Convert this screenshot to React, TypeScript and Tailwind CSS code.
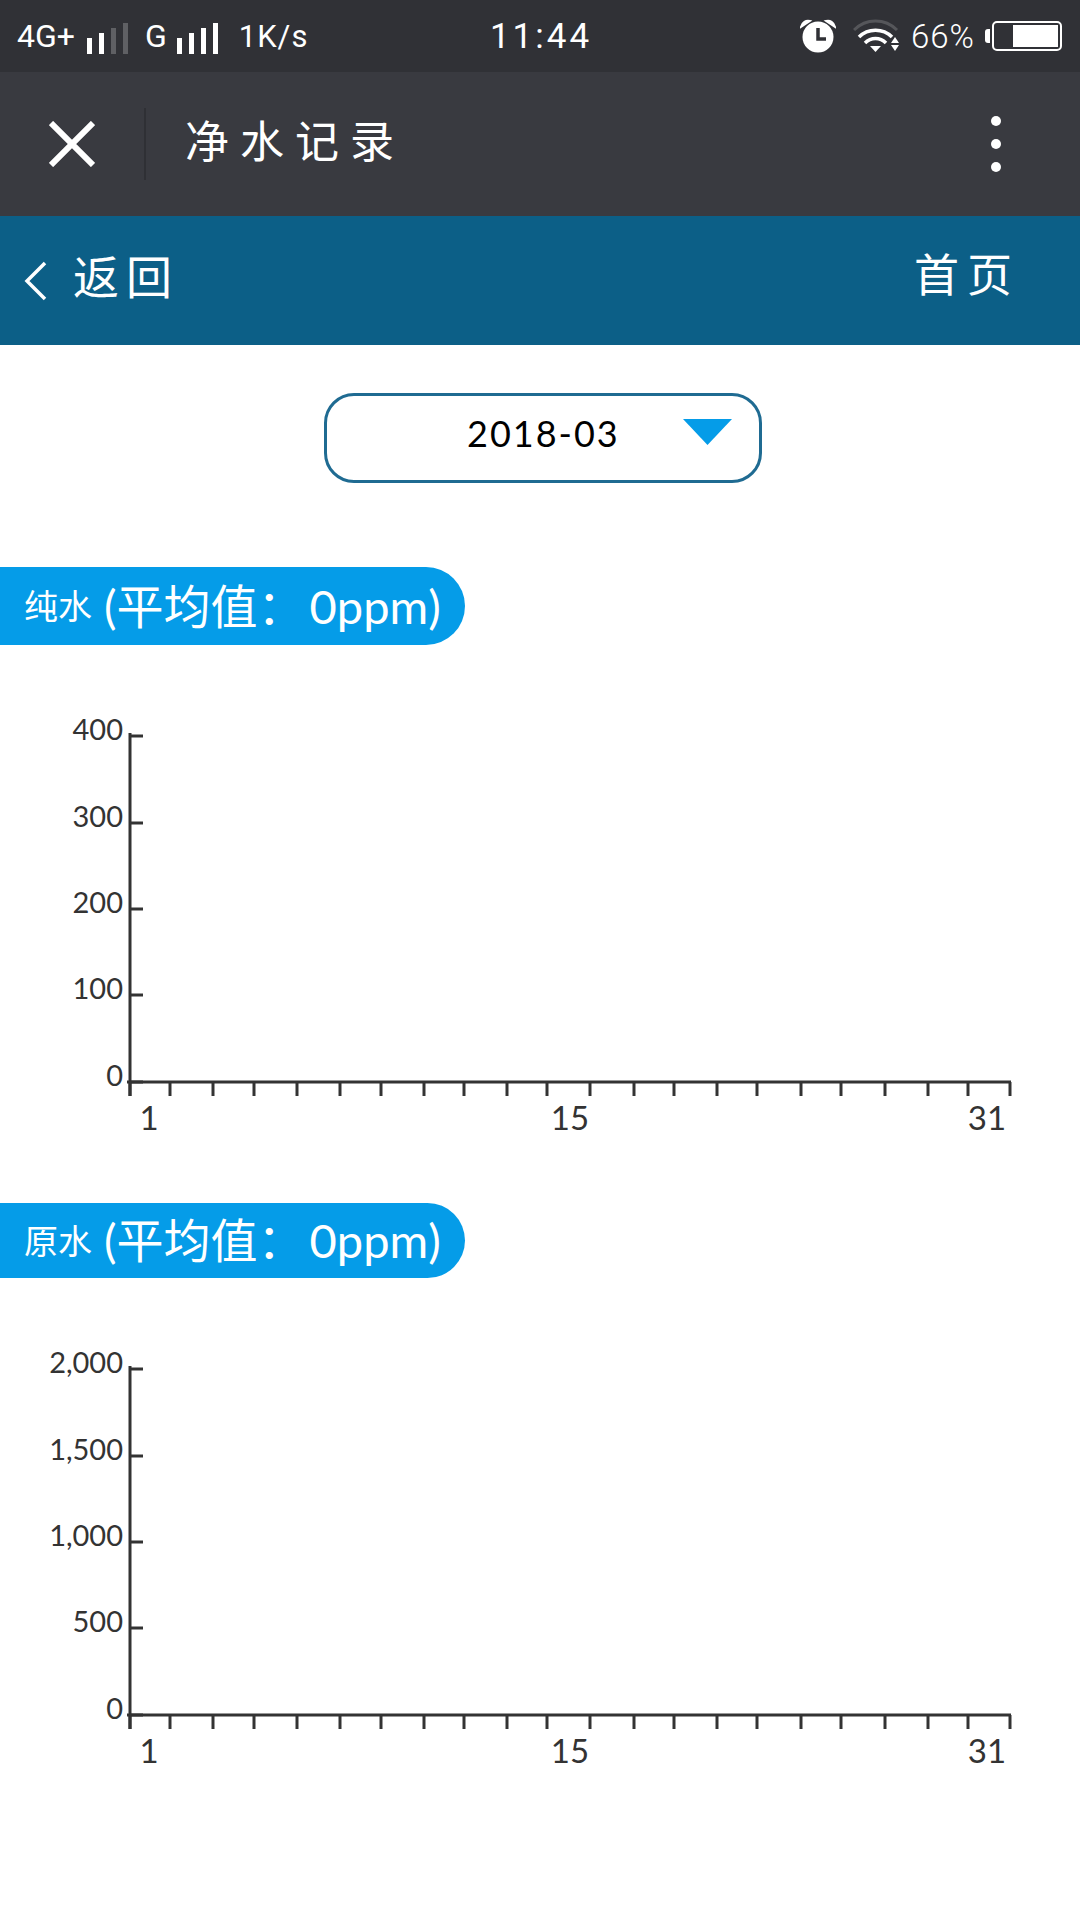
import React from 'react'

const FONT_CLASS = "font-['Lato','Noto_Sans_CJK_SC',sans-serif]"

function SignalBars({ dim = 0 }: { dim?: number }) {
    const heights = [16, 21, 26, 31]
    return (
        <div className="flex items-end gap-[7px] h-[31px]">
            {heights.map((h, i) => (
                <div
                    key={h}
                    className={i >= 4 - dim ? 'w-[5px] bg-[#5f6064]' : 'w-[5px] bg-white'}
                    style={{ height: h }}
                />
            ))}
        </div>
    )
}

function AlarmIcon() {
    return (
        <svg width="36" height="34" viewBox="0 0 36 34">
            <path d="M1 8 C2 3 6 1 10 2 Z" fill="#fff" stroke="#fff" strokeWidth="2" />
            <path d="M35 8 C34 3 30 1 26 2 Z" fill="#fff" stroke="#fff" strokeWidth="2" />
            <circle cx="18" cy="18" r="15.5" fill="#fff" />
            <path d="M18 9 V20 H26" fill="none" stroke="#303136" strokeWidth="3.5" />
        </svg>
    )
}

function WifiIcon() {
    return (
        <svg width="46" height="34" viewBox="0 0 46 34">
            <path d="M1 11 C13 -1 32 -1 44 11" fill="none" stroke="#55565a" strokeWidth="3" />
            <path d="M6 18 C15 9 30 9 39 18" fill="none" stroke="#fff" strokeWidth="3.5" />
            <path d="M12 24 C18 18 27 18 33 24" fill="none" stroke="#fff" strokeWidth="3.5" />
            <path d="M17 27 H28 L22.5 33 Z" fill="#fff" />
            <path d="M42 18 L46 24 H38 Z" fill="#fff" />
            <path d="M38 26 H46 L42 32 Z" fill="#fff" />
        </svg>
    )
}

function StatusBar() {
    return (
        <div className="grid grid-cols-[1fr_auto_1fr] items-center h-[72px] bg-[#303136] text-white font-['Roboto',sans-serif]">
            <div className="flex items-center pl-[17px]">
                <span className="text-[32px] leading-none">4G+</span>
                <div className="ml-[12px] mt-[4px]">
                    <SignalBars dim={2} />
                </div>
                <span className="ml-[17px] text-[32px] leading-none">G</span>
                <div className="ml-[10px] mt-[4px]">
                    <SignalBars />
                </div>
                <span className="ml-[21px] text-[31px] leading-none tracking-[1px]">1K/s</span>
            </div>
            <span className="ml-[2px] text-[35px] leading-none tracking-[3px]">11:44</span>
            <div className="flex items-center justify-end pr-[18px]">
                <AlarmIcon />
                <div className="ml-[17px]">
                    <WifiIcon />
                </div>
                <span className="ml-[12px] text-[33px] leading-none font-light tracking-[1px]">66%</span>
                <div className="ml-[10px] w-[5px] h-[14px] rounded-l-[3px] bg-white" />
                <div className="flex justify-end ml-[2px] w-[70px] h-[30px] border-2 border-white rounded-[5px] p-[2px]">
                    <div className="w-[45px] bg-white" />
                </div>
            </div>
        </div>
    )
}

function TitleBar() {
    return (
        <div className="flex items-center h-[144px] bg-[#393a40] text-white">
            <svg className="ml-[49px]" width="46" height="46" viewBox="0 0 46 46">
                <path d="M2 2 L44 44 M44 2 L2 44" stroke="#fff" strokeWidth="6" fill="none" />
            </svg>
            <div className="ml-[49px] w-[2px] h-[72px] bg-[#2f3035]" />
            <span className={`ml-[39px] mb-[7px] text-[44px] leading-none tracking-[11px] ${FONT_CLASS}`}>净水记录</span>
            <div className="ml-auto mr-[79px] flex flex-col gap-[13px]">
                <div className="w-[10px] h-[10px] rounded-full bg-white" />
                <div className="w-[10px] h-[10px] rounded-full bg-white" />
                <div className="w-[10px] h-[10px] rounded-full bg-white" />
            </div>
        </div>
    )
}

function NavBar() {
    return (
        <div className={`flex items-center h-[129px] bg-[#0c5f87] text-white ${FONT_CLASS}`}>
            <svg className="ml-[24px]" width="24" height="40" viewBox="0 0 24 40">
                <path d="M21 2 L3 20 L21 38" fill="none" stroke="#fff" strokeWidth="3.5" />
            </svg>
            <span className="ml-[25px] mb-[7px] text-[46px] leading-none tracking-[7px]">返回</span>
            <span className="ml-auto mr-[60px] mb-[11px] text-[45px] leading-none tracking-[8px]">首页</span>
        </div>
    )
}

function DateSelect() {
    return (
        <div className="flex items-center ml-[324px] mt-[48px] w-[438px] h-[90px] bg-white border-[3px] border-[#1f6b92] rounded-[30px]">
            <span className={`ml-[140px] mb-[11px] text-[36px] leading-none tracking-[2px] text-black ${FONT_CLASS}`}>2018-03</span>
            <svg className="ml-[63px] mb-[12px]" width="49" height="26" viewBox="0 0 49 26">
                <path d="M0 0 H49 L24.5 26 Z" fill="#059ce8" />
            </svg>
        </div>
    )
}

function Badge({ name, height }: { name: string; height: string }) {
    return (
        <div className={`flex items-center pl-[24px] w-[465px] ${height} bg-[#059ce8] rounded-r-[40px] text-white ${FONT_CLASS}`}>
            <span className="text-[34px] leading-none">{name}</span>
            <span className="ml-[12px] text-[47px] leading-none whitespace-nowrap">
                (平均值：<span className="ml-[5px]">0ppm)</span>
            </span>
        </div>
    )
}

const AXIS_LEFT = 130
const BASELINE = 437
const Y_TICKS = [91, 178, 264, 350, 437]
// the tick spacing in the picture isn't even, it alternates around 42px
const X_TICKS = [130, 170, 213, 254, 297, 340, 381, 424, 464, 507, 547, 590, 634, 674, 717, 757, 801, 841, 885, 928, 968, 1010]

function Chart({ labels }: { labels: string[] }) {
    return (
        <svg className="block" width="1080" height="558" viewBox="0 0 1080 558">
            <path d={`M${AXIS_LEFT} ${Y_TICKS[0] - 3} V${BASELINE + 14}`} stroke="#333" strokeWidth="3" fill="none" />
            <path d={`M${AXIS_LEFT - 3} ${BASELINE} H1011`} stroke="#333" strokeWidth="3" fill="none" />
            {labels.map((label, i) => (
                <g key={label}>
                    <path d={`M${AXIS_LEFT} ${Y_TICKS[i]} H143`} stroke="#333" strokeWidth="3" fill="none" />
                    <text
                        x="123"
                        y={Y_TICKS[i] + 4}
                        textAnchor="end"
                        fill="#333"
                        className={`text-[29px] ${FONT_CLASS}`}
                    >
                        {label}
                    </text>
                </g>
            ))}
            {X_TICKS.map((x) => (
                <path key={x} d={`M${x} ${BASELINE} V${BASELINE + 14}`} stroke="#333" strokeWidth="3" fill="none" />
            ))}
            <text x="149" y={BASELINE + 48} textAnchor="middle" fill="#333" className={`text-[33px] ${FONT_CLASS}`}>
                1
            </text>
            <text x="570" y={BASELINE + 48} textAnchor="middle" fill="#333" className={`text-[33px] ${FONT_CLASS}`}>
                15
            </text>
            <text x="987" y={BASELINE + 48} textAnchor="middle" fill="#333" className={`text-[33px] ${FONT_CLASS}`}>
                31
            </text>
        </svg>
    )
}

export default function App() {
    return (
        <div className="w-[1080px] h-[1920px] bg-white overflow-hidden">
            <StatusBar />
            <TitleBar />
            <NavBar />
            <DateSelect />
            <div className="mt-[84px]">
                <Badge name="纯水" height="h-[78px]" />
                <Chart labels={['400', '300', '200', '100', '0']} />
            </div>
            <Badge name="原水" height="h-[75px]" />
            <Chart labels={['2,000', '1,500', '1,000', '500', '0']} />
        </div>
    )
}
